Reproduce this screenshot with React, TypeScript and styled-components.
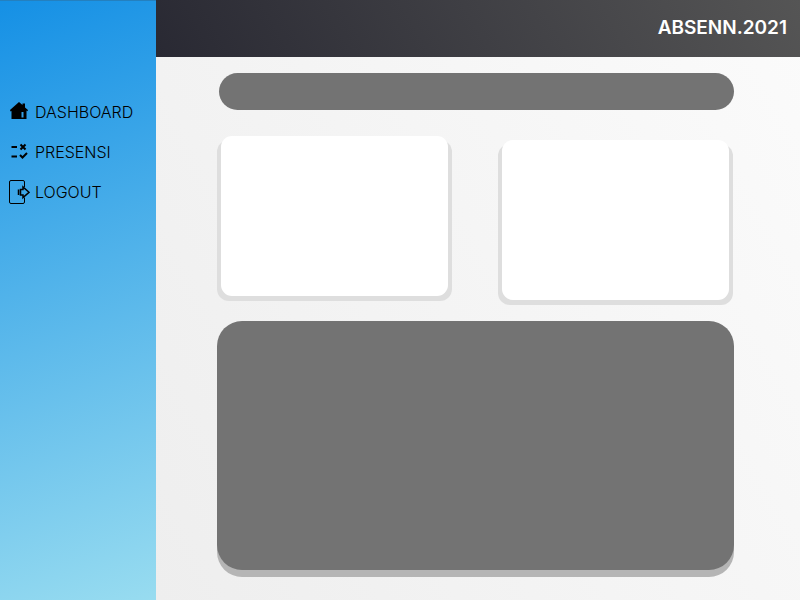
import React from "react";
import styled, { createGlobalStyle } from "styled-components";

const GlobalStyle = createGlobalStyle`
  *, *::before, *::after { box-sizing: border-box; }
  body { margin: 0; font-family: "Inter", "Liberation Sans", sans-serif; }
`;

const Page = styled.div`
  display: grid;
  grid-template-columns: 156px 1fr;
  min-height: 100vh;
`;

const Sidebar = styled.aside`
  padding: 91px 8px 0;
  border-top: 1px solid #2480bf;
  background: linear-gradient(160deg, #1590e5 0%, #98dcf0 100%);
`;

const Nav = styled.nav`
  display: flex;
  flex-direction: column;
`;

const NavLink = styled.a`
  display: grid;
  grid-template-columns: 22px 1fr;
  align-items: center;
  column-gap: 5px;
  height: 40px;
  color: #000;
  font-family: "Inter", sans-serif;
  font-size: 16px;
  font-weight: 300;
  line-height: 20px;
  text-decoration: none;
`;

const Content = styled.div`
  display: flex;
  flex-direction: column;
  background: linear-gradient(60deg, #eeeeee 0%, #fbfbfb 100%);
`;

const Header = styled.header`
  display: flex;
  align-items: center;
  justify-content: flex-end;
  height: 57px;
  padding: 0 13px 2px;
  background: linear-gradient(60deg, #292933 0%, #555555 100%);
`;

const Brand = styled.span`
  color: #fff;
  font-size: 19px;
  font-weight: 600;
  line-height: 24px;
`;

const Main = styled.main`
  display: flex;
  flex: 1;
  flex-direction: column;
  padding: 16px 66px 30px 61px;
`;

const TitleBar = styled.div`
  height: 37px;
  margin-left: 2px;
  border-radius: 19px;
  background: #737373;
`;

const CardRow = styled.div`
  display: grid;
  grid-template-columns: 1fr 1fr;
  gap: 46px;
  align-items: start;
  margin: 30px 1px 16px 0;
`;

const CardBase = styled.section<{ $lowered?: boolean }>`
  display: flex;
  height: 161px;
  margin-top: ${({ $lowered }) => ($lowered ? 4 : 0)}px;
  padding: 0 4px 5px;
  border-radius: 12px;
  background: #dedede;
`;

const CardFace = styled.div`
  flex: 1;
  margin-top: -4px;
  border-radius: 11px;
  background: #fff;
`;

const Panel = styled.section`
  flex: 1;
  min-height: 249px;
  border-radius: 25px;
  background: #737373;
  box-shadow: 0 7px 0 #b5b5b5;
`;

const Icon = styled.svg`
  display: block;
  width: 22px;
  height: 26px;
`;

const HomeIcon = () => (
  <Icon viewBox="0 0 22 26" aria-hidden="true">
    <path d="M2 11 11 3l3.500 3V4.500h2.500V8.500l3 2.500-.6 1.200-.9-.7V20H3.500v-8l-1 .6z" fill="#000" />
    <path d="M13.500 13h2v5.500h-2z" fill="#329fe5" />
  </Icon>
);

const RulesIcon = () => (
  <Icon viewBox="0 0 22 26" aria-hidden="true" fill="none" stroke="#000" strokeWidth="2">
    <path d="M3.500 8h5.500M3.500 17.500H9M12.500 5.500l5 5M17.500 5.500l-5 5M12 16l2.500 2.500 4.500-4.500" />
  </Icon>
);

const ExitIcon = () => (
  <Icon viewBox="0 0 22 26" aria-hidden="true" fill="none" stroke="#000">
    <path d="M16.500 8V3q0-1.500-1.500-1.500H3Q1.500 1.500 1.500 3v20Q1.500 24.500 3 24.500h12q1.500 0 1.500-1.500v-4.500" />
    <path d="M10.500 10.500v5.500M12.500 10.500H15V8l6 5.300-6 5.200V16h-2.500z" strokeWidth="1.500" />
  </Icon>
);

const links = [
  { label: "DASHBOARD", icon: HomeIcon },
  { label: "PRESENSI", icon: RulesIcon },
  { label: "LOGOUT", icon: ExitIcon },
];

export default function App() {
  return (
    <>
      <GlobalStyle />
      <Page>
        <Sidebar>
          <Nav>
            {links.map(({ label, icon: Glyph }) => (
              <NavLink key={label} href="#">
                <Glyph />
                {label}
              </NavLink>
            ))}
          </Nav>
        </Sidebar>
        <Content>
          <Header>
            <Brand>ABSENN.2021</Brand>
          </Header>
          <Main>
            <TitleBar />
            <CardRow>
              <CardBase>
                <CardFace />
              </CardBase>
              <CardBase $lowered>
                <CardFace />
              </CardBase>
            </CardRow>
            <Panel />
          </Main>
        </Content>
      </Page>
    </>
  );
}
